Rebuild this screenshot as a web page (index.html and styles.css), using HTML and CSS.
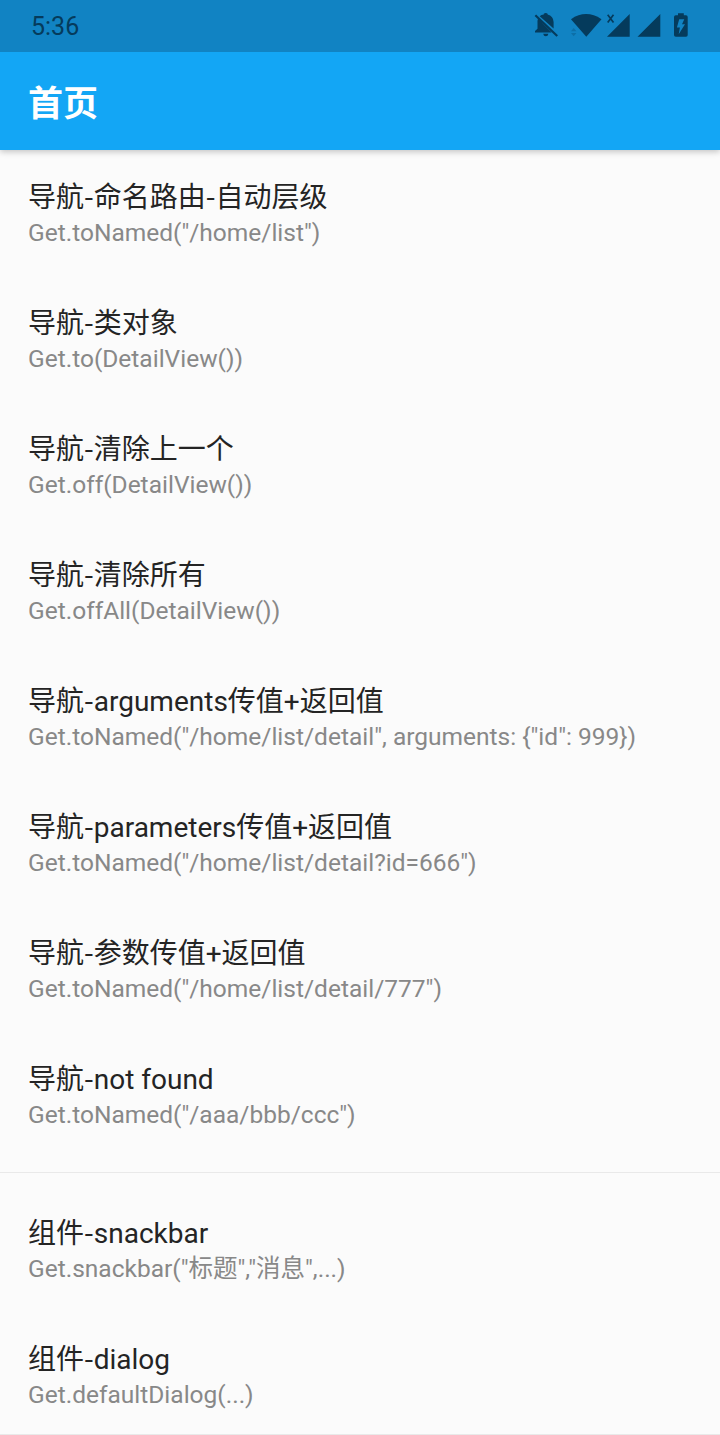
FILE: index.html
```html
<!DOCTYPE html>
<html lang="zh-CN">
<head>
<meta charset="utf-8">
<title>首页</title>
<link rel="stylesheet" href="styles.css">
</head>
<body>
<div class="screen">
  <header class="header">
    <div class="status-bar">
      <span class="clock">5:36</span>
      <svg class="status-icons" width="160" height="32" viewBox="0 0 160 32">
        <!-- muted bell -->
        <path d="M4.600 5.900L6.100 4.500L28 25.300L26.500 26.800ZM9.700 6.200Q11.200 4.900 13.800 4.500V3.800Q15.700 2.400 17.600 3.800V4.500Q23.400 6.100 23.600 12V18.600ZM7.900 9L21.600 22.400H5V21L7.500 18.800V12.500Q7.300 10.800 7.900 9ZM13.200 23.700H18.400Q18 26.300 15.800 26.300Q13.600 26.300 13.200 23.700Z"/>
        <!-- wifi -->
        <path d="M41 9.200Q56 -1 71.500 9.200L56.300 26.800Z"/>
        <path class="faint" d="M41 21.300L43.700 18L46.400 21.300ZM41 23L43.700 26.200L46.400 23Z"/>
        <!-- mobile signals -->
        <path d="M99.700 3.900V26.700H77ZM130.300 3.900V26.700H107.500Z"/>
        <path class="cross" d="M77.700 4.700L83.500 12.600M83.500 4.700L77.700 12.600"/>
        <!-- charging battery -->
        <path fill-rule="evenodd" d="M148 3.300H153.800V5.200H156Q157.700 5.200 157.700 7V25Q157.700 26.800 156 26.800H145.800Q144 26.800 144 25V7Q144 5.200 145.800 5.200H148ZM149.200 9.300L146.900 17.600H149.900L148.700 24.300L155 14.300H152L154.300 9.300Z"/>
      </svg>
    </div>
    <div class="app-bar"><h1 class="page-title">首页</h1></div>
  </header>
  <main class="list">
    <div class="tile"><div class="title">导航<span class="dash">-</span>命名路由<span class="dash">-</span>自动层级</div><div class="subtitle">Get.toNamed("/home/list")</div></div>
    <div class="tile"><div class="title">导航<span class="dash">-</span>类对象</div><div class="subtitle">Get.to(DetailView())</div></div>
    <div class="tile"><div class="title">导航<span class="dash">-</span>清除上一个</div><div class="subtitle">Get.off(DetailView())</div></div>
    <div class="tile"><div class="title">导航<span class="dash">-</span>清除所有</div><div class="subtitle">Get.offAll(DetailView())</div></div>
    <div class="tile"><div class="title">导航<span class="dash">-</span>arguments传值+返回值</div><div class="subtitle">Get.toNamed("/home/list/detail", arguments: {"id": 999})</div></div>
    <div class="tile"><div class="title">导航<span class="dash">-</span>parameters传值+返回值</div><div class="subtitle">Get.toNamed("/home/list/detail?id=666")</div></div>
    <div class="tile"><div class="title">导航<span class="dash">-</span>参数传值+返回值</div><div class="subtitle">Get.toNamed("/home/list/detail/777")</div></div>
    <div class="tile"><div class="title">导航<span class="dash">-</span>not found</div><div class="subtitle">Get.toNamed("/aaa/bbb/ccc")</div></div>
    <hr class="divider">
    <div class="tile"><div class="title">组件<span class="dash">-</span>snackbar</div><div class="subtitle">Get.snackbar("标题","消息",...)</div></div>
    <div class="tile tile-last"><div class="title">组件<span class="dash">-</span>dialog</div><div class="subtitle">Get.defaultDialog(...)</div></div>
  </main>
</div>
</body>
</html>
```
FILE: styles.css
```css
* {
  box-sizing: border-box;
}

body {
  margin: 0;
  background: #fbfbfb;
  font-family: Roboto, "Noto Sans CJK SC", sans-serif;
}

.screen {
  display: flex;
  flex-direction: column;
  width: 720px;
  height: 1435px;
  overflow: hidden;
}

.header {
  flex: none;
  background: #13a6f5;
  box-shadow: 0 2px 6px rgba(0, 0, 0, 0.22);
}

.status-bar {
  display: flex;
  align-items: center;
  justify-content: space-between;
  height: 52px;
  padding: 0 30px 0 31px;
  background: #1183c3;
  color: #053b5c;
}

.clock {
  padding-top: 2px;
  font-size: 25px;
  line-height: 50px;
}

.status-icons {
  fill: #053b5c;
}

.status-icons .faint {
  fill: #0d6fa7;
}

.status-icons .cross {
  fill: none;
  stroke: #053b5c;
  stroke-width: 1.7;
}

.app-bar {
  display: flex;
  align-items: center;
  height: 98px;
  padding: 8px 28px 0;
}

.page-title {
  margin: 0;
  color: #fff;
  font-size: 35px;
  font-weight: 700;
  line-height: 48px;
}

.list {
  flex: 1;
  min-height: 0;
}

.tile {
  height: 126px;
  padding: 30px 28px 0;
  white-space: nowrap;
}

.title {
  height: 35px;
  color: #242424;
  font-size: 28px;
  line-height: 36px;
}

.dash {
  font-family: "Noto Sans CJK SC", sans-serif;
  line-height: 1;
}

.subtitle {
  height: 36px;
  color: #888;
  font-size: 24.5px;
  line-height: 36px;
}

.divider {
  height: 28px;
  margin: 0;
  border: 0;
  background: linear-gradient(#e9e9e9, #e9e9e9) 0 14px / 100% 1px no-repeat;
}

.tile-last {
  height: 123px;
  border-bottom: 1px solid #e9e9e9;
}
```
